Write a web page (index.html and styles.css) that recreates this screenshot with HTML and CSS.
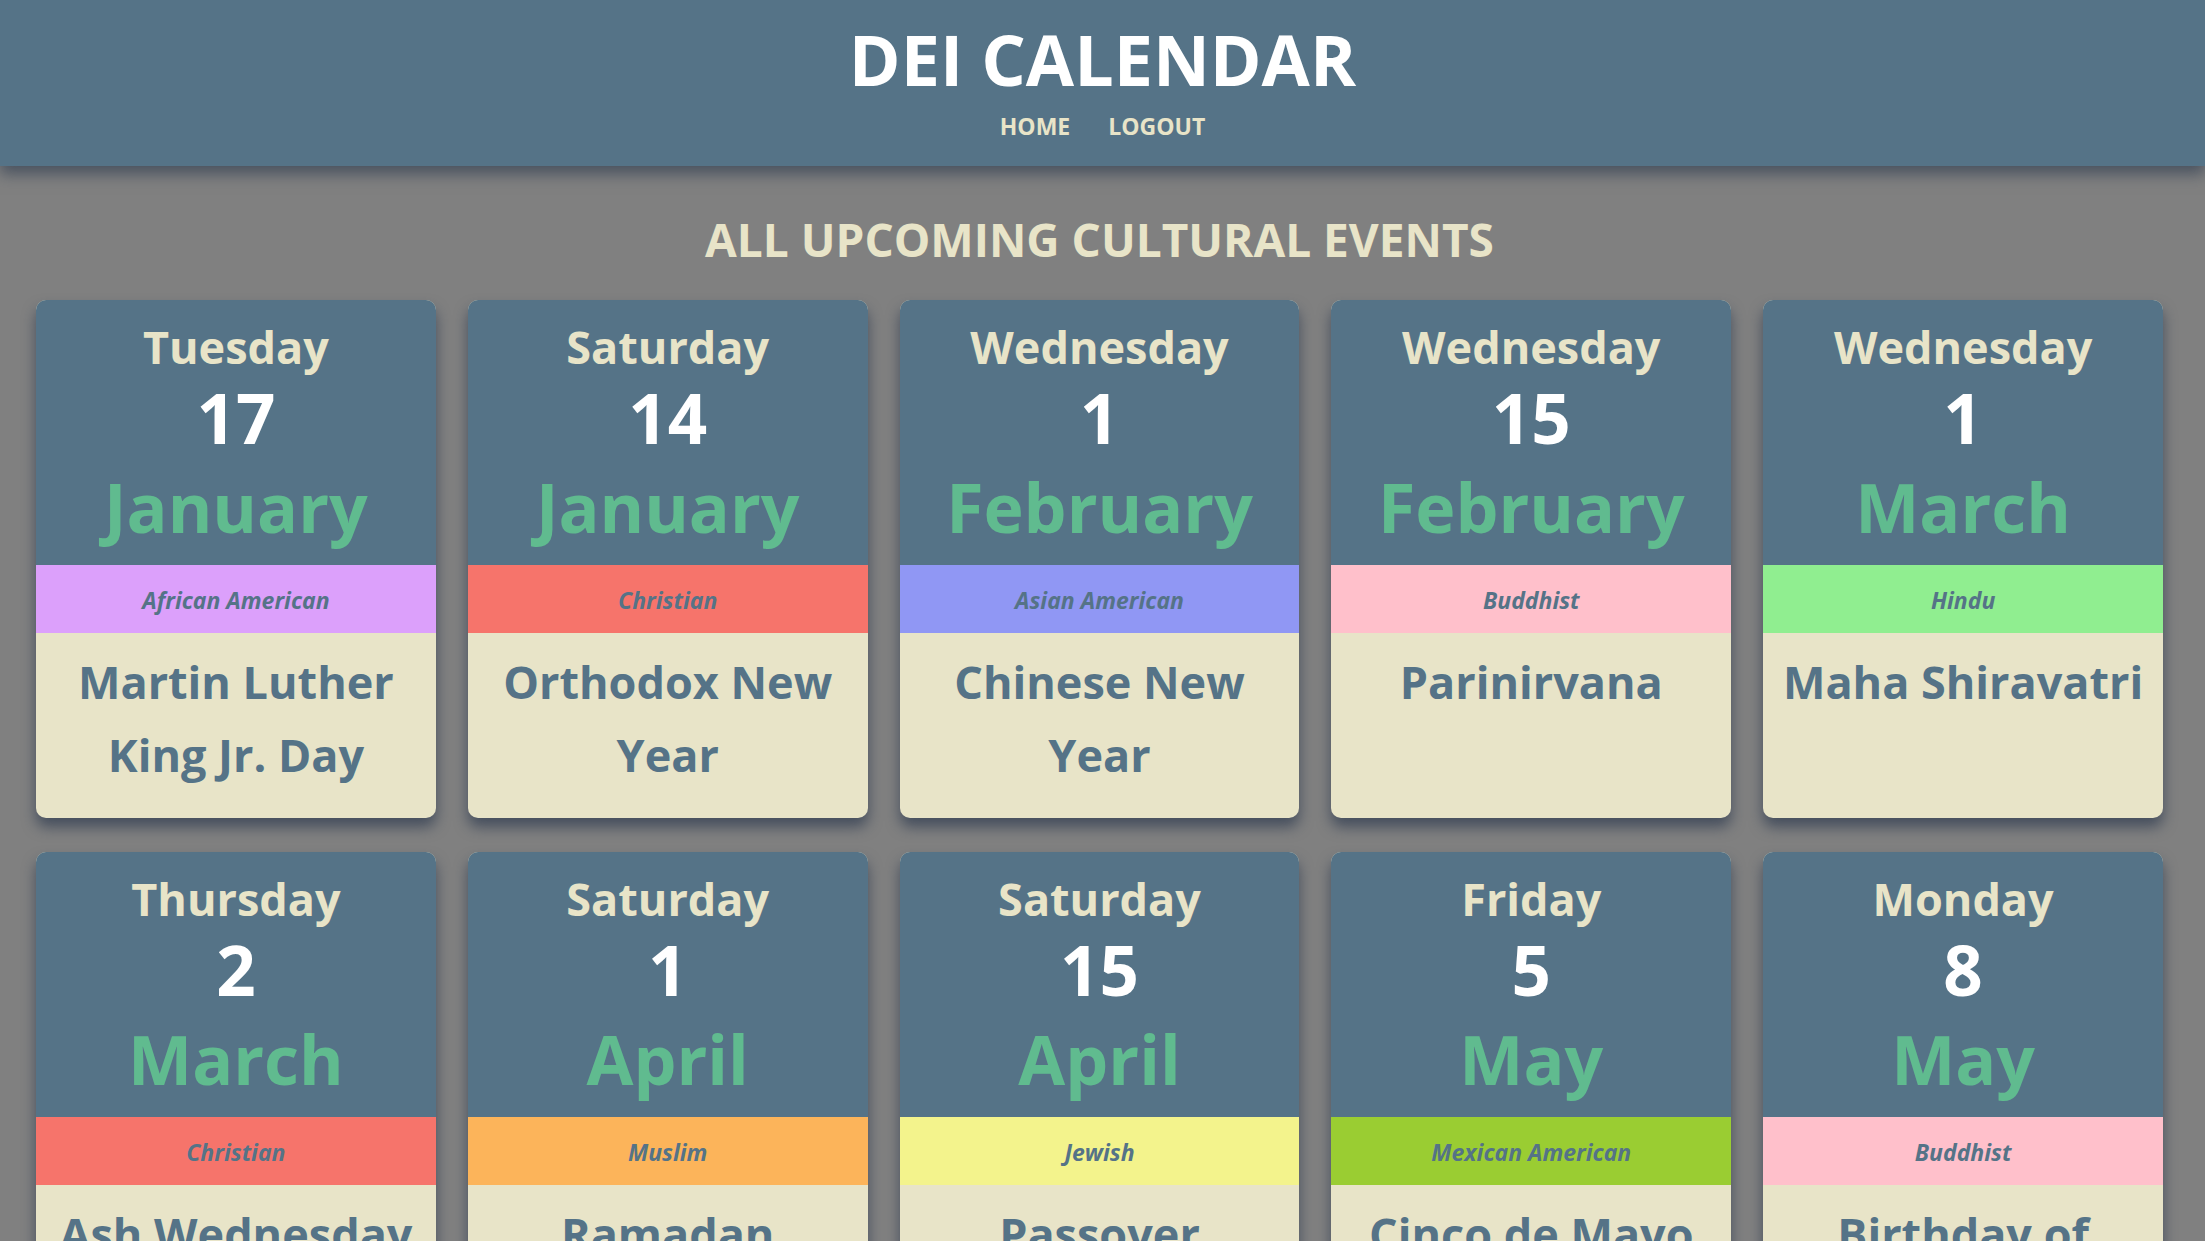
FILE: index.html
```html
<!DOCTYPE html>
<html lang="en">
<head>
<meta charset="utf-8">
<title>DEI Calendar</title>
<link rel="stylesheet" href="styles.css">
</head>
<body>
<header class="site-header">
  <h1 class="site-title">DEI CALENDAR</h1>
  <nav class="site-nav">
    <a href="#" class="nav-link">HOME</a>
    <a href="#" class="nav-link">LOGOUT</a>
  </nav>
</header>
<main class="content">
  <h2 class="section-title">ALL UPCOMING CULTURAL EVENTS</h2>
  <div class="event-grid">
    <article class="card">
      <div class="card-date"><div class="day">Tuesday</div><div class="num">17</div><div class="month">January</div></div>
      <div class="tag tag-african">African American</div>
      <div class="card-body"><h3 class="event-name">Martin Luther King Jr. Day</h3></div>
    </article>
    <article class="card">
      <div class="card-date"><div class="day">Saturday</div><div class="num">14</div><div class="month">January</div></div>
      <div class="tag tag-christian">Christian</div>
      <div class="card-body"><h3 class="event-name">Orthodox New Year</h3></div>
    </article>
    <article class="card">
      <div class="card-date"><div class="day">Wednesday</div><div class="num">1</div><div class="month">February</div></div>
      <div class="tag tag-asian">Asian American</div>
      <div class="card-body"><h3 class="event-name">Chinese New Year</h3></div>
    </article>
    <article class="card">
      <div class="card-date"><div class="day">Wednesday</div><div class="num">15</div><div class="month">February</div></div>
      <div class="tag tag-buddhist">Buddhist</div>
      <div class="card-body"><h3 class="event-name">Parinirvana</h3></div>
    </article>
    <article class="card">
      <div class="card-date"><div class="day">Wednesday</div><div class="num">1</div><div class="month">March</div></div>
      <div class="tag tag-hindu">Hindu</div>
      <div class="card-body"><h3 class="event-name">Maha Shiravatri</h3></div>
    </article>
    <article class="card">
      <div class="card-date"><div class="day">Thursday</div><div class="num">2</div><div class="month">March</div></div>
      <div class="tag tag-christian">Christian</div>
      <div class="card-body"><h3 class="event-name">Ash Wednesday</h3></div>
    </article>
    <article class="card">
      <div class="card-date"><div class="day">Saturday</div><div class="num">1</div><div class="month">April</div></div>
      <div class="tag tag-muslim">Muslim</div>
      <div class="card-body"><h3 class="event-name">Ramadan</h3></div>
    </article>
    <article class="card">
      <div class="card-date"><div class="day">Saturday</div><div class="num">15</div><div class="month">April</div></div>
      <div class="tag tag-jewish">Jewish</div>
      <div class="card-body"><h3 class="event-name">Passover</h3></div>
    </article>
    <article class="card">
      <div class="card-date"><div class="day">Friday</div><div class="num">5</div><div class="month">May</div></div>
      <div class="tag tag-mexican">Mexican American</div>
      <div class="card-body"><h3 class="event-name">Cinco de Mayo</h3></div>
    </article>
    <article class="card">
      <div class="card-date"><div class="day">Monday</div><div class="num">8</div><div class="month">May</div></div>
      <div class="tag tag-buddhist">Buddhist</div>
      <div class="card-body"><h3 class="event-name">Birthday of Buddha</h3></div>
    </article>
  </div>
</main>
</body>
</html>
```
FILE: styles.css
```css
* { box-sizing: border-box; }

body {
  margin: 0;
  background: #808080;
  font-family: "Open Sans", "Noto Sans", sans-serif;
  font-weight: 700;
}

.site-header {
  background: #557387;
  height: 166px;
  padding-top: 23px;
  text-align: center;
  box-shadow: 0 8px 14px rgba(30, 45, 70, 0.55);
  position: relative;
  z-index: 1;
}

.site-title {
  margin: 0;
  font-size: 70px;
  line-height: 72px;
  color: #ffffff;
  font-weight: 700;
}

.site-nav {
  margin-top: 19px;
  display: flex;
  justify-content: center;
  gap: 38px;
}

.nav-link {
  font-size: 23px;
  line-height: 24px;
  color: #e8e4c8;
  text-decoration: none;
}

.content {
  padding: 50px 42px 40px 36px;
}

.section-title {
  margin: 0 0 37px;
  text-align: center;
  font-size: 46px;
  line-height: 47px;
  color: #e8e4c8;
}

.event-grid {
  display: grid;
  grid-template-columns: repeat(5, 1fr);
  gap: 34px 32px;
}

.card {
  display: flex;
  flex-direction: column;
  border-radius: 10px;
  overflow: hidden;
  background: #e8e4c8;
  box-shadow: 0 9px 14px rgba(30, 45, 70, 0.6);
  text-align: center;
}

.card-date {
  background: #557387;
  padding: 17px 0 10px;
}

.day {
  font-size: 45px;
  line-height: 59px;
  color: #e8e4c8;
}

.num {
  font-size: 69px;
  line-height: 82px;
  color: #ffffff;
}

.month {
  font-size: 68px;
  line-height: 97px;
  color: #60bb8f;
}

.tag {
  height: 68px;
  line-height: 70px;
  font-size: 23px;
  font-style: italic;
  color: #557387;
}

.tag-african { background: #dca0fb; }
.tag-christian { background: #f6746b; }
.tag-asian { background: #9097f4; }
.tag-buddhist { background: #ffc0cb; }
.tag-hindu { background: #90ee90; }
.tag-muslim { background: #fcb45a; }
.tag-jewish { background: #f3f38c; }
.tag-mexican { background: #9acd32; }

.card-body {
  flex: 1;
  padding: 12px 10px 27px;
}

.event-name {
  margin: 0;
  font-size: 45px;
  line-height: 73px;
  color: #557387;
  font-weight: 700;
}
```
